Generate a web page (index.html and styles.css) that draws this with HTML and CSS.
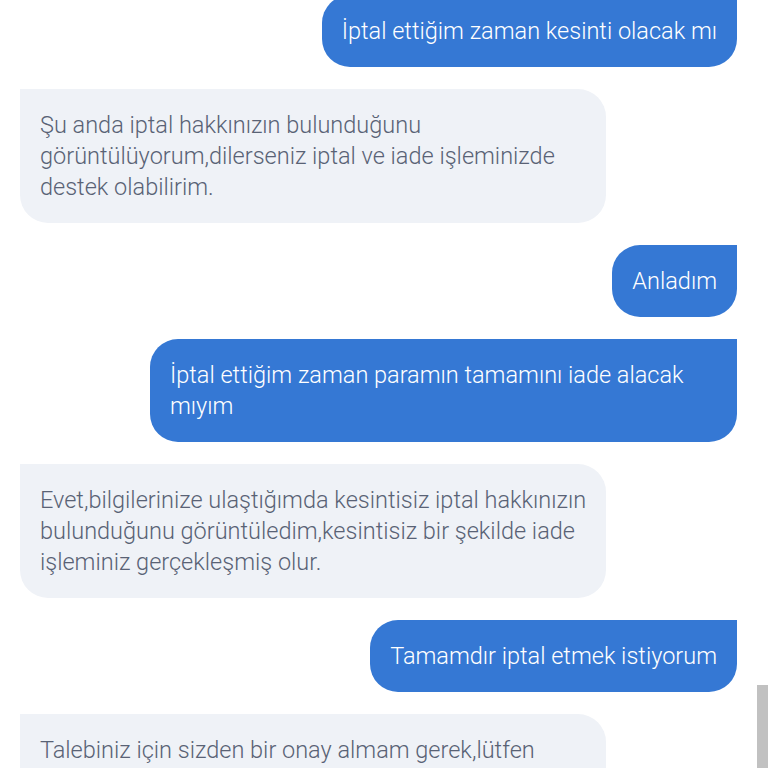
FILE: index.html
```html
<!DOCTYPE html>
<html lang="tr">
<head>
<meta charset="utf-8">
<link rel="stylesheet" href="styles.css">
</head>
<body>
<div class="chat">
  <div class="msg user">İptal ettiğim zaman kesinti olacak mı</div>
  <div class="msg bot">Şu anda iptal hakkınızın bulunduğunu görüntülüyorum,dilerseniz iptal ve iade işleminizde destek olabilirim.</div>
  <div class="msg user">Anladım</div>
  <div class="msg user">İptal ettiğim zaman paramın tamamını iade alacak mıyım</div>
  <div class="msg bot">Evet,bilgilerinize ulaştığımda kesintisiz iptal hakkınızın bulunduğunu görüntüledim,kesintisiz bir şekilde iade işleminiz gerçekleşmiş olur.</div>
  <div class="msg user">Tamamdır iptal etmek istiyorum</div>
  <div class="msg bot">Talebiniz için sizden bir onay almam gerek,lütfen onaylayınız.</div>
</div>
<div class="scroll-thumb"></div>
</body>
</html>
```
FILE: styles.css
```css
html, body {
  margin: 0;
  padding: 0;
  background: #ffffff;
  height: 768px;
  overflow: hidden;
}
.chat {
  display: flex;
  flex-direction: column;
  gap: 22px;
  padding: 0 31px 0 20px;
  margin-top: -5px;
  font-family: Roboto, "Noto Sans", sans-serif;
  font-size: 23.5px;
  font-weight: 300;
  line-height: 31px;
}
.msg {
  max-width: 547px;
  padding: 20.5px 20px;
  border-radius: 28px;
}
.user {
  align-self: flex-end;
  background: #3578d4;
  color: #ffffff;
  border-top-right-radius: 0;
}
.bot {
  align-self: flex-start;
  width: 560px;
  max-width: none;
  padding-right: 6px;
  background: #eff2f7;
  color: #596275;
  border-top-left-radius: 0;
}
.scroll-thumb {
  position: absolute;
  right: 0;
  top: 685px;
  width: 11px;
  height: 90px;
  background: #c1c1c1;
}
```
